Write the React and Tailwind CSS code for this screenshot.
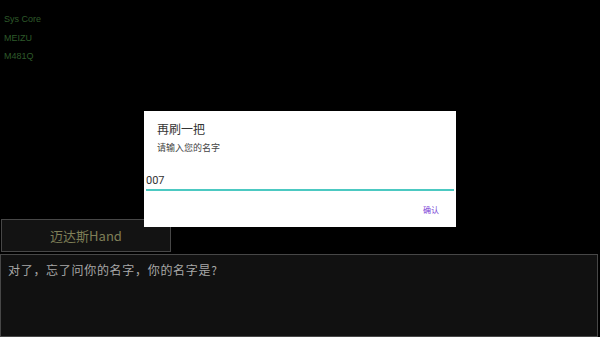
export default function App() {
  const cjk = { fontFamily: '"Noto Sans CJK SC", "Liberation Sans", sans-serif' };
  return (
    <div className="relative w-[600px] h-[337px] bg-black overflow-hidden" style={cjk}>
      {/* Debug info */}
      <div className="absolute left-[4px] top-[10px] text-[9px] leading-[18.5px] text-[#2e5a2a] font-['Liberation_Sans',sans-serif]">
        <p>Sys Core</p>
        <p>MEIZU</p>
        <p>M481Q</p>
      </div>

      {/* Bottom dialogue area */}
      <div className="absolute left-0 top-[219px] w-[600px] flex flex-col gap-[2px]">
        <div className="w-[170px] h-[33px] ml-[1px] bg-[#131313] border border-[#474747] flex items-center justify-center text-[13px] text-[#7f7f57]">
          迈达斯Hand
        </div>
        <div className="w-[598px] h-[83px] bg-[#111111] border border-[#474747] px-[7px] pt-[6px] text-[12px] tracking-[0.7px] text-[#a8a8a8]">
          对了，忘了问你的名字，你的名字是?
        </div>
      </div>

      {/* Modal */}
      <div className="absolute left-[144px] top-[111px] w-[312px] h-[116px] bg-white flex flex-col">
        <div className="pl-[13px] pt-[10px] text-[12px] leading-[16px] text-[#333]">再刷一把</div>
        <div className="pl-[13px] pt-[5px] text-[9px] leading-[12px] text-[#444]">请输入您的名字</div>
        <div className="mt-[19px] mx-[2px] border-b-[2px] border-[#4cc9c2] text-[11px] leading-[15px] text-[#333] pb-[1px] font-['Roboto',sans-serif]">
          007
        </div>
        <div className="flex justify-end pr-[17px] pt-[13px] text-[8px] text-[#7a3fd6]">确认</div>
      </div>
    </div>
  );
}
